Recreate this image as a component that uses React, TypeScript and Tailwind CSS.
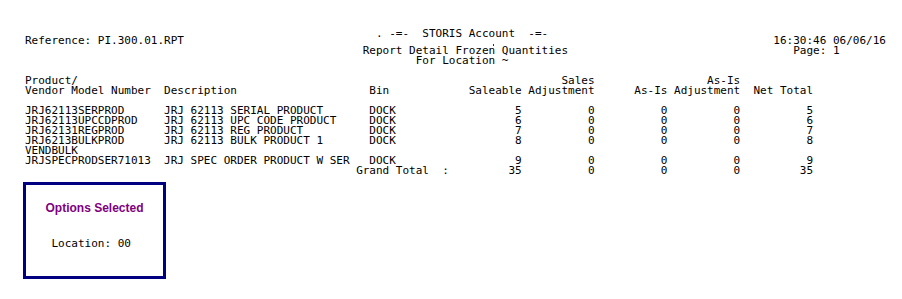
import React from 'react';

type Part = [number, string];

// build one fixed-width report line from [column, text] pairs
const line = (parts: Part[]) => {
  let s = '';
  for (const [col, text] of parts) {
    s = s.padEnd(col, ' ') + text;
  }
  return s;
};

// right aligned value ending before column `end`
const num = (end: number, value: number | string): Part => {
  const text = String(value);
  return [end - text.length, text];
};

interface Row {
  product: string;
  description?: string;
  bin?: string;
  saleable?: number;
  salesAdj?: number;
  asIs?: number;
  asIsAdj?: number;
  net?: number;
}

const rows: Row[] = [
  { product: 'JRJ62113SERPROD', description: 'JRJ 62113 SERIAL PRODUCT', bin: 'DOCK', saleable: 5, salesAdj: 0, asIs: 0, asIsAdj: 0, net: 5 },
  { product: 'JRJ62113UPCCDPROD', description: 'JRJ 62113 UPC CODE PRODUCT', bin: 'DOCK', saleable: 6, salesAdj: 0, asIs: 0, asIsAdj: 0, net: 6 },
  { product: 'JRJ62131REGPROD', description: 'JRJ 62113 REG PRODUCT', bin: 'DOCK', saleable: 7, salesAdj: 0, asIs: 0, asIsAdj: 0, net: 7 },
  { product: 'JRJ6213BULKPROD', description: 'JRJ 62113 BULK PRODUCT 1', bin: 'DOCK', saleable: 8, salesAdj: 0, asIs: 0, asIsAdj: 0, net: 8 },
  { product: 'VENDBULK' },
  { product: 'JRJSPECPRODSER71013', description: 'JRJ SPEC ORDER PRODUCT W SER', bin: 'DOCK', saleable: 9, salesAdj: 0, asIs: 0, asIsAdj: 0, net: 9 },
];

const rowLine = (r: Row) => {
  if (!r.description) return line([[0, r.product]]);
  return line([
    [0, r.product],
    [21, r.description],
    [52, r.bin || ''],
    num(75, r.saleable ?? ''),
    num(86, r.salesAdj ?? ''),
    num(97, r.asIs ?? ''),
    num(108, r.asIsAdj ?? ''),
    num(119, r.net ?? ''),
  ]);
};

const total = (key: keyof Row) => rows.reduce((sum, r) => sum + ((r[key] as number) || 0), 0);

const reportLines = [
  line([[0, 'Reference: PI.300.01.RPT'], [113, '16:30:46 06/06/16']]),
  line([[51, 'Report Detail Frozen Quantities'], [116, 'Page: 1']]),
  line([[59, 'For Location ~']]),
  '',
  line([[0, 'Product/'], [81, 'Sales'], [103, 'As-Is']]),
  line([
    [0, 'Vendor Model Number'],
    [21, 'Description'],
    [52, 'Bin'],
    [67, 'Saleable'],
    [76, 'Adjustment'],
    [92, 'As-Is'],
    [98, 'Adjustment'],
    [110, 'Net Total'],
  ]),
  '',
  ...rows.map(rowLine),
  line([
    [50, 'Grand Total  :'],
    num(75, total('saleable')),
    num(86, total('salesAdj')),
    num(97, total('asIs')),
    num(108, total('asIsAdj')),
    num(119, total('net')),
  ]),
];

const App: React.FC = () => {
  return (
    <div className="relative w-[902px] h-[299px] bg-white text-black overflow-hidden">
      {/* Report text */}
      <div className="pt-[29px] pl-[25px] font-['DejaVu_Sans_Mono',monospace] text-[11px] leading-[10px] whitespace-pre">
        <div>{line([[53, '.'], [55, '-=-  STORIS Account  -=-']])}</div>
        <div className="-mt-[3px]">
          {reportLines.map((l, i) => (
            <div key={i} className="h-[10px]">
              {l}
            </div>
          ))}
        </div>
      </div>
      <div className="absolute left-[493px] top-[44px] w-px h-[2px] bg-[#333]" />

      {/* Options box */}
      <div className="ml-[23px] mt-[6px] w-[143px] border-[3px] border-[#000080] bg-white pt-[16px] pb-[27px] text-center">
        <div className="font-['Liberation_Sans',Arial,sans-serif] font-bold text-[12px] leading-[14px] text-[#800080]">
          Options Selected
        </div>
        <div className="mt-[24px] font-['DejaVu_Sans_Mono',monospace] text-[11px] leading-[10px] whitespace-pre">
          {'Location: 00\u00a0'}
        </div>
      </div>
    </div>
  );
};

export default App;
